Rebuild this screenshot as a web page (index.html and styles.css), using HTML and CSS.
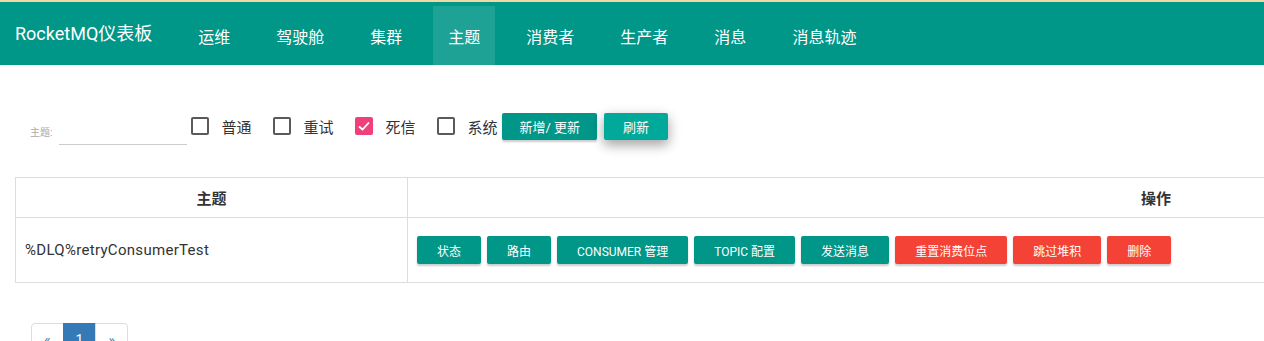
FILE: index.html
```html
<!DOCTYPE html>
<html lang="zh">
<head>
    <meta charset="UTF-8">
    <meta name="viewport" content="width=device-width, initial-scale=1.0">
    <title>RocketMQ仪表板</title>
    <link rel="stylesheet" href="styles.css">
</head>
<body>
    <header class="navbar">
        <div class="brand">RocketMQ仪表板</div>
        <nav class="nav">
            <a class="nav-item">运维</a>
            <a class="nav-item">驾驶舱</a>
            <a class="nav-item">集群</a>
            <a class="nav-item active">主题</a>
            <a class="nav-item">消费者</a>
            <a class="nav-item">生产者</a>
            <a class="nav-item">消息</a>
            <a class="nav-item">消息轨迹</a>
        </nav>
    </header>

    <main class="content">
        <div class="toolbar">
            <div class="field">
                <label class="field-label">主题:</label>
                <input type="text" class="field-input">
            </div>
            <label class="check"><span class="box"></span>普通</label>
            <label class="check"><span class="box"></span>重试</label>
            <label class="check"><span class="box checked"><svg viewBox="0 0 18 18" width="18" height="18"><path d="M4 9.5 L7.5 12.5 L14 5.5" fill="none" stroke="#fff" stroke-width="1.8"/></svg></span>死信</label>
            <label class="check"><span class="box"></span>系统</label>
            <button class="btn btn-tool">新增/ 更新</button>
            <button class="btn btn-tool btn-focus">刷新</button>
        </div>

        <table class="topic-table">
            <thead>
                <tr>
                    <th class="col-topic">主题</th>
                    <th>操作</th>
                </tr>
            </thead>
            <tbody>
                <tr>
                    <td class="topic-name">%DLQ%retryConsumerTest</td>
                    <td>
                        <div class="actions">
                            <button class="btn">状态</button>
                            <button class="btn">路由</button>
                            <button class="btn">CONSUMER 管理</button>
                            <button class="btn">TOPIC 配置</button>
                            <button class="btn">发送消息</button>
                            <button class="btn btn-red">重置消费位点</button>
                            <button class="btn btn-red">跳过堆积</button>
                            <button class="btn btn-red">删除</button>
                        </div>
                    </td>
                </tr>
            </tbody>
        </table>

        <ul class="pagination">
            <li><a>«</a></li>
            <li class="current"><a>1</a></li>
            <li><a>»</a></li>
        </ul>
    </main>
</body>
</html>
```

FILE: styles.css
```css
html {
    overflow: hidden;
}

body {
    margin: 0;
    font-family: Roboto, "Noto Sans CJK SC", sans-serif;
    color: #333;
    background-color: #fff;
}

.navbar {
    display: flex;
    height: 63px;
    background-color: #009688;
    border-top: 2px solid #f1d9a3;
    color: #fff;
}

.brand {
    display: flex;
    align-items: center;
    padding-left: 15px;
    font-size: 18px;
    margin-top: -3px;
}

.nav {
    display: flex;
    gap: 16px;
    margin-left: 31px;
    padding-top: 4px;
}

    .nav-item {
        display: flex;
        align-items: center;
        padding: 0 15px;
        font-size: 16px;
        color: #fff;
    }

    .nav-item.active {
        background-color: rgba(255, 255, 255, 0.12);
    }

.content {
    padding: 0 15px;
}

.toolbar {
    display: flex;
    align-items: center;
    height: 32px;
    margin-top: 45px;
}

.field {
    display: flex;
    align-items: flex-end;
    align-self: flex-start;
    height: 35px;
    margin-left: 15px;
    margin-right: 4px;
}

.field-label {
    font-size: 10px;
    line-height: 12px;
    color: #aaa;
    margin-bottom: 6px;
}

.field-input {
    width: 128px;
    height: 24px;
    margin-left: 7px;
    padding: 0;
    border: none;
    border-bottom: 1px solid #ccc;
    outline: none;
    box-sizing: border-box;
}

.check {
    display: flex;
    align-items: center;
    font-size: 15px;
    color: #333;
    margin-right: 22px;
}

    .check:nth-of-type(4) {
        margin-right: 5px;
    }

.box {
    width: 18px;
    height: 18px;
    box-sizing: border-box;
    border: 2px solid #5a5a5a;
    border-radius: 2px;
    margin-right: 12px;
}

    .box.checked {
        border: none;
        background-color: #ef4079;
    }

        .box.checked svg {
            display: block;
        }

.btn {
    height: 28px;
    padding: 0 20px;
    border: none;
    border-radius: 2px;
    background-color: #009688;
    color: #fff;
    font-family: Roboto, "Noto Sans CJK SC", sans-serif;
    font-size: 12px;
    box-shadow: 0 2px 2px rgba(0, 0, 0, 0.2);
    cursor: pointer;
}

.btn-tool {
    height: 27px;
    padding: 0 17px;
    margin-right: 7px;
    font-size: 13px;
}

.btn-focus {
    background-color: #00a99a;
    padding: 0 19px;
    box-shadow: 0 5px 11px rgba(0, 0, 0, 0.25), 0 4px 15px rgba(0, 0, 0, 0.15);
}

.btn-red {
    background-color: #f44336;
}

.actions {
    display: flex;
    gap: 6px;
}

.topic-table {
    width: 1890px;
    margin-top: 35px;
    border-collapse: collapse;
    border: 1px solid #ddd;
}

    .topic-table th {
        height: 39px;
        font-size: 15px;
        font-weight: bold;
        text-align: center;
        border: 1px solid #ddd;
        padding: 0;
    }

    .topic-table .col-topic {
        width: 391px;
    }

    .topic-table td {
        height: 64px;
        border: 1px solid #ddd;
        padding: 0 9px;
    }

    .topic-table .topic-name {
        font-size: 15px;
        letter-spacing: 0.3px;
    }

.pagination {
    display: flex;
    list-style: none;
    margin: 40px 0 0 16px;
    padding: 0;
}

    .pagination a {
        display: block;
        padding: 6px 12px;
        font-size: 14px;
        line-height: 20px;
        color: #337ab7;
        border: 1px solid #ddd;
        margin-left: -1px;
    }

    .pagination li:first-child a {
        border-radius: 4px 0 0 4px;
        margin-left: 0;
    }

    .pagination li:last-child a {
        border-radius: 0 4px 4px 0;
    }

    .pagination .current a {
        background-color: #337ab7;
        border-color: #337ab7;
        color: #fff;
    }
```
